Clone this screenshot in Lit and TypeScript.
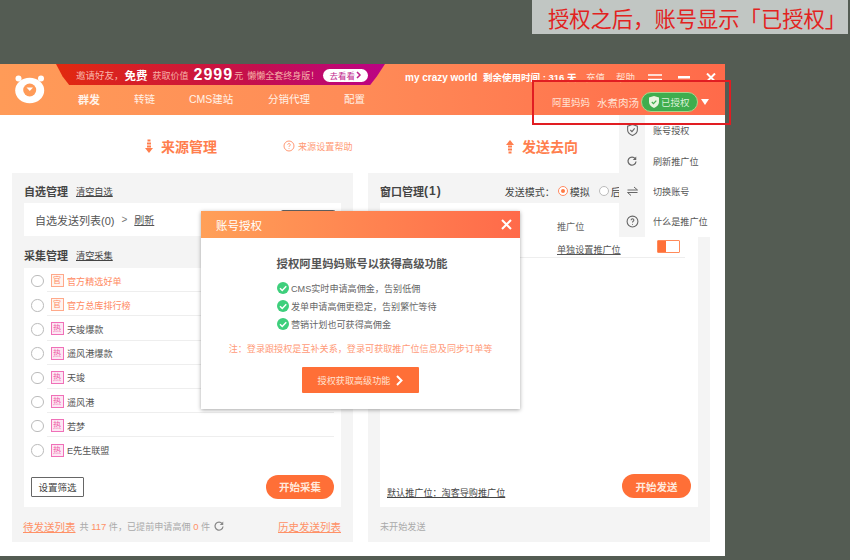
import { LitElement, html, css, svg } from 'lit';
import { customElement } from 'lit/decorators.js';

const SOURCES = [
  { tag: '官', name: '官方精选好单', official: true },
  { tag: '官', name: '官方总库排行榜', official: true },
  { tag: '热', name: '天竣爆款', official: false },
  { tag: '热', name: '遥风港爆款', official: false },
  { tag: '热', name: '天竣', official: false },
  { tag: '热', name: '遥风港', official: false },
  { tag: '热', name: '若梦', official: false },
  { tag: '热', name: 'E先生联盟', official: false },
];

const NAV = ['群发', '转链', 'CMS建站', '分销代理', '配置'];

const BENEFITS = [
  'CMS实时申请高佣金，告别低佣',
  '发单申请高佣更稳定，告别繁忙等待',
  '营销计划也可获得高佣金',
];

const refreshIcon = svg`<path d="M18.5 7.5A8 8 0 1 0 20 13" fill="none" stroke="currentColor" stroke-width="2.5"/><path d="M20.5 3v7h-7z" fill="currentColor"/>`;

@customElement('app-root')
export class AppRoot extends LitElement {
  static styles = css`
    :host {
      display: block;
      width: 850px;
      height: 560px;
      overflow: hidden;
      position: relative;
      background: #545c53;
      font-family: "Liberation Sans", "Noto Sans CJK SC", sans-serif;
      font-size: 10px;
      color: #555;
    }
    * { box-sizing: border-box; }
    .page { padding-top: 64px; }
    .window {
      width: 725px;
      height: 492px;
      background: #fff;
      position: relative;
    }

    /* header */
    .header {
      height: 51px;
      display: flex;
      background: linear-gradient(90deg, #ff9b58 0%, #ff8b57 50%, #ff6a4a 100%);
      color: #fff;
    }
    .logo { width: 56px; padding: 10px 0 0 15px; flex: none; }
    .head-main { flex: 1; display: flex; flex-direction: column; min-width: 0; }
    .head-top { display: flex; height: 21px; }
    .promo {
      width: 329px;
      height: 21px;
      background: linear-gradient(90deg, #e2290e, #c40f4d 60%, #bb0385);
      clip-path: polygon(0 0, 100% 0, 97.5% 60%, 95.5% 100%, 4% 100%, 2% 60%);
      display: flex;
      align-items: center;
      padding: 1px 0 0 20px;
      font-size: 9px;
      color: #f7b3a8;
      white-space: nowrap;
      flex: none;
    }
    .promo .invite { font-size: 9.5px; }
    .promo b { color: #fff; font-size: 11.5px; margin: 0 5px 0 1px; }
    .promo .price { color: #fff; font-size: 16px; font-weight: 700; margin: 0 1px 0 5px; letter-spacing: 1px; }
    .promo .yuan { margin-right: 4px; }
    .promo .see {
      margin-left: 4px;
      width: 45px;
      height: 13px;
      border-radius: 7px;
      background: #fff;
      color: #c0248c;
      font-size: 8.5px;
      display: flex;
      align-items: center;
      justify-content: center;
      gap: 1px;
    }
    .user {
      margin-left: 20px;
      display: flex;
      align-items: center;
      font-size: 9.5px;
      white-space: nowrap;
      padding-top: 5px;
    }
    .user .name { font-weight: 700; width: 78px; font-size: 10px; }
    .user .days { width: 103px; font-weight: 700; }
    .user .link { width: 30px; color: #ffe3d6; }
    .win-ctrl { display: flex; align-items: center; gap: 16px; margin-left: 2px; }
    .head-bottom { flex: 1; display: flex; align-items: center; }
    .nav { display: flex; margin-left: 22px; font-size: 10.5px; color: #fff2e8; padding-bottom: 3px; }
    .nav span { white-space: nowrap; }
    .nav span:nth-child(1) { width: 56px; font-weight: 700; font-size: 11px; }
    .nav span:nth-child(2) { width: 55px; }
    .nav span:nth-child(3) { width: 79px; }
    .nav span:nth-child(4) { width: 76px; }
    .account {
      margin-left: auto;
      display: flex;
      align-items: center;
      padding-right: 16px;
      padding-top: 4px;
      color: #ffe3d6;
    }
    .account .ali { font-size: 9.5px; margin-right: 7px; }
    .account .nick { font-size: 10.5px; margin-right: 2px; }
    .authed {
      width: 57px;
      height: 20px;
      border-radius: 10px;
      background: #3fad4e;
      border: 1px solid #a9d68a;
      display: flex;
      align-items: center;
      gap: 2px;
      padding-left: 7px;
      font-size: 9.5px;
      color: #d8f0d8;
      margin-right: 3px;
    }
    .caret {
      width: 0;
      height: 0;
      border-left: 4px solid transparent;
      border-right: 4px solid transparent;
      border-top: 6px solid #fff;
    }

    /* body */
    .body {
      display: grid;
      grid-template-columns: 341px 342px;
      column-gap: 15px;
      padding: 0 12px;
    }
    .title {
      height: 58px;
      padding-top: 4px;
      display: flex;
      align-items: center;
      font-size: 14px;
      font-weight: 700;
      color: #ff7e4d;
      white-space: nowrap;
    }
    .title.left { padding-left: 133px; }
    .title.right { padding-left: 138px; }
    .title svg { margin-right: 8px; }
    .help {
      margin-left: 66px;
      display: flex;
      align-items: center;
      font-size: 9.1px;
      font-weight: 400;
      color: #ff9a75;
    }
    .help svg { margin-right: 3px; }
    .panel {
      height: 369px;
      background: #f4f4f4;
      padding: 0 12px;
      display: flex;
      flex-direction: column;
    }
    .sec-title {
      display: flex;
      align-items: center;
      height: 30px;
      padding-top: 6px;
      font-size: 11px;
      font-weight: 700;
      color: #444;
      white-space: nowrap;
      flex: none;
    }
    .sec-title.second { height: 32px; }
    .sec-title a {
      margin-left: 8px;
      font-size: 9.2px;
      font-weight: 400;
      color: #444;
      text-decoration: underline;
    }
    .sec-title .cnt { font-size: 12px; letter-spacing: 1px; }
    .picked {
      height: 33px;
      background: #fff;
      display: flex;
      align-items: center;
      padding-left: 11px;
      font-size: 11px;
      color: #555;
      position: relative;
      white-space: nowrap;
      flex: none;
    }
    .picked i { font-style: normal; margin: 0 7px; color: #777; font-size: 10px; }
    .picked a { text-decoration: underline; font-size: 10px; }
    .picked .ghost {
      position: absolute;
      left: 257px;
      top: 7px;
      width: 54px;
      height: 10px;
      border: 1px solid #666;
      border-bottom: 0;
      border-radius: 2px 2px 0 0;
    }
    .list {
      flex: 1;
      background: #fff;
      padding: 0 7px;
    }
    .row {
      display: flex;
      align-items: center;
      height: 24.2px;
    }
    .radio {
      width: 12.5px;
      height: 12.5px;
      margin-top: 2px;
      border-radius: 50%;
      border: 1.5px solid #bbb;
      background: #fff;
      flex: none;
      margin-right: 3px;
    }
    .row-main {
      flex: 1;
      height: 100%;
      padding: 2px 0 0 4px;
      display: flex;
      align-items: center;
      border-bottom: 1px solid #eee;
      font-size: 9.1px;
      color: #555;
      white-space: nowrap;
    }
    .row:nth-child(8) .row-main { border-bottom: 0; }
    .row-main.official { color: #ff8a62; }
    .tag {
      width: 13px;
      height: 13px;
      margin-right: 3.5px;
      border: 1px solid #f070b8;
      background: #fde6f3;
      color: #ee5fa8;
      font-size: 8px;
      line-height: 11px;
      text-align: center;
      flex: none;
    }
    .official .tag { border-color: #ffa98a; background: #fff4ef; color: #ff8a62; }
    .list-foot {
      display: flex;
      align-items: center;
      justify-content: space-between;
      margin-top: 13px;
    }
    .filter {
      width: 53px;
      height: 20px;
      margin-top: 1px;
      border: 1px solid #666;
      border-radius: 1px;
      font-size: 9.5px;
      color: #444;
      display: flex;
      align-items: center;
      justify-content: center;
    }
    .go {
      width: 68px;
      height: 24px;
      border-radius: 12px;
      background: #ff6f37;
      color: #ffe9dc;
      font-size: 10.5px;
      font-weight: 700;
      display: flex;
      align-items: center;
      justify-content: center;
      flex: none;
    }
    .panel-foot {
      height: 35px;
      padding-top: 3px;
      display: flex;
      align-items: center;
      font-size: 9.1px;
      color: #aaa;
      white-space: nowrap;
      flex: none;
    }
    .panel-foot a { color: #ff9166; font-size: 10.5px; text-decoration: underline; }
    .panel-foot a:first-child { margin-left: -1px; }
    .panel-foot em { font-style: normal; color: #ff9166; font-size: 9.5px; }
    .panel-foot .count { margin-left: 4px; }
    .panel-foot svg { margin-left: 3px; color: #888; }
    .panel-foot .hist { margin-left: auto; }

    /* right panel */
    .mode {
      margin-left: 63px;
      display: flex;
      align-items: center;
      font-size: 10px;
      font-weight: 400;
      color: #444;
      white-space: nowrap;
    }
    .mode .dot {
      width: 10px;
      height: 10px;
      border-radius: 50%;
      border: 1px solid #ff8a62;
      margin: 0 2px 0 3px;
      display: inline-flex;
      align-items: center;
      justify-content: center;
      background: #fff;
    }
    .mode .dot::after {
      content: '';
      width: 4px;
      height: 4px;
      border-radius: 50%;
      background: #ff7a45;
    }
    .mode .dot.off { border-color: #bbb; margin-left: 9px; }
    .mode .dot.off::after { display: none; }
    .win-list {
      flex: 1;
      background: #fff;
      display: flex;
      flex-direction: column;
      padding: 0 7px;
      font-size: 9.1px;
    }
    .win-head {
      height: 29px;
      margin-top: 8px;
      display: flex;
      align-items: center;
      padding-left: 170px;
      color: #666;
    }
    .win-row {
      height: 18px;
      display: flex;
      align-items: center;
      border-bottom: 1px solid #eee;
      padding-left: 170px;
      margin-right: 6px;
      color: #555;
      white-space: nowrap;
    }
    .win-row a { text-decoration: underline; }
    .toggle {
      margin: -5px 0 0 36px;
      width: 23px;
      height: 13px;
      border: 1px solid #ff8a5a;
      background: linear-gradient(90deg, #ff7038 0 8px, #fff 8px);
      border-radius: 1px;
      flex: none;
    }
    .win-foot {
      margin-top: auto;
      height: 33px;
      display: flex;
      align-items: flex-start;
      justify-content: space-between;
      color: #444;
      white-space: nowrap;
    }
    .win-foot a { text-decoration: underline; padding-top: 11px; }
    .win-foot .go { width: 69px; }

    /* overlays */
    .menu {
      position: absolute;
      left: 619px;
      top: 51px;
      width: 106px;
      height: 122px;
      background: #fff;
      display: grid;
      grid-template-columns: 26px 1fr;
      grid-auto-rows: 30.4px;
      font-size: 9.1px;
      color: #555;
    }
    .menu div { display: flex; align-items: center; }
    .menu .ic { background: #f4f4f4; justify-content: center; color: #666; }
    .menu .lbl { padding-left: 8px; white-space: nowrap; }

    .modal {
      position: absolute;
      left: 201px;
      top: 147px;
      width: 319px;
      height: 198px;
      background: #fff;
      box-shadow: 0 1px 4px rgba(0, 0, 0, .35);
      display: flex;
      flex-direction: column;
      align-items: center;
    }
    .modal-head {
      align-self: stretch;
      height: 27px;
      background: linear-gradient(90deg, #ffa058, #ff6a4a);
      display: flex;
      align-items: center;
      justify-content: space-between;
      padding: 0 8px 0 15px;
      color: #fff;
      font-size: 11.5px;
      flex: none;
    }
    .modal h2 {
      margin: 18px 0 0;
      padding-left: 3px;
      font-size: 11.4px;
      font-weight: 700;
      color: #555;
      line-height: 16px;
    }
    .benefits { align-self: flex-start; margin: 7px 0 0 76px; }
    .benefit {
      height: 18px;
      display: flex;
      align-items: center;
      gap: 2px;
      font-size: 9.1px;
      color: #666;
      white-space: nowrap;
    }
    .note { margin-top: 9px; font-size: 9.1px; color: #ff9a78; line-height: 14px; white-space: nowrap; }
    .cta {
      margin-top: 11px;
      width: 117px;
      height: 26px;
      background: #ff6f37;
      border-radius: 1px;
      color: #ffe3d3;
      font-size: 9.1px;
      display: flex;
      align-items: center;
      justify-content: center;
      gap: 6px;
    }

    .highlight {
      position: absolute;
      left: 532px;
      top: 80px;
      width: 199px;
      height: 45px;
      border: 2px solid #e11d22;
      pointer-events: none;
    }
    .note-box {
      position: absolute;
      left: 532px;
      top: 0;
      width: 316px;
      height: 34px;
      padding-left: 14px;
      background: #c1c6c3;
      color: #e2231f;
      font-size: 21.3px;
      display: flex;
      align-items: center;
      justify-content: center;
      white-space: nowrap;
    }
  `;

  private _logo() {
    return html`<svg width="30" height="30" viewBox="0 0 30 30">
      <circle cx="3.5" cy="4.5" r="3" fill="#fff"/>
      <circle cx="26" cy="4.5" r="3" fill="#fff"/>
      <ellipse cx="14.7" cy="16.5" rx="14.5" ry="12.7" fill="#fff"/>
      <circle cx="14.7" cy="16" r="6.5" fill="#ff9b58"/>
      <path d="M11.5 13.5h6.5l-3.2 3.5z" fill="#fff"/>
    </svg>`;
  }

  private _arrow(up: boolean) {
    return html`<svg width="8" height="15" viewBox="0 0 8 14" fill="#ff7e4d" style=${up ? 'transform:rotate(180deg)' : ''}>
      <rect x="2.5" y="0" width="3" height="2"/><rect x="2" y="3" width="4" height="2"/>
      <rect x="2" y="6" width="4" height="2"/><path d="M0 8.5h8l-4 5z"/>
    </svg>`;
  }

  private _helpIcon(size: number) {
    return html`<svg width=${size} height=${size} viewBox="0 0 24 24" fill="none" stroke="currentColor" stroke-width="2">
      <circle cx="12" cy="12" r="10"/>
      <path d="M9.5 9.5a2.5 2.5 0 1 1 3.8 2.1c-.9.6-1.3 1.1-1.3 2.4"/>
      <path d="M12 16.5v1.5"/>
    </svg>`;
  }

  private _check() {
    return html`<svg width="12" height="12" viewBox="0 0 24 24">
      <circle cx="12" cy="12" r="12" fill="#3ecf7c"/>
      <path d="M6 12.5l4.5 4.5L18.5 8.5" fill="none" stroke="#fff" stroke-width="3"/>
    </svg>`;
  }

  private _renderHeader() {
    return html`<div class="header">
      <div class="logo">${this._logo()}</div>
      <div class="head-main">
        <div class="head-top">
          <div class="promo">
            <span class="invite">邀请好友，</span><b>免费</b>获取价值<span class="price">2999</span><span class="yuan">元</span>懒懒全套终身版！
            <span class="see">去看看<svg width="6" height="8" viewBox="0 0 6 8"><path d="M1 1l3 3-3 3" fill="none" stroke="#c0248c" stroke-width="1.5"/></svg></span>
          </div>
          <div class="user">
            <span class="name">my crazy world</span>
            <span class="days">剩余使用时间 : 316 天</span>
            <span class="link">充值</span>
            <span class="link">帮助</span>
            <div class="win-ctrl">
              <svg width="14" height="7" viewBox="0 0 14 7"><path d="M0 1h14M0 5.5h14" stroke="#fff" stroke-width="1.3"/></svg>
              <svg width="12" height="3" viewBox="0 0 12 3"><rect width="12" height="2.5" fill="#fff"/></svg>
              <svg width="10" height="9" viewBox="0 0 10 9"><path d="M1 .5l8 8M9 .5l-8 8" stroke="#fff" stroke-width="2"/></svg>
            </div>
          </div>
        </div>
        <div class="head-bottom">
          <div class="nav">${NAV.map((n) => html`<span>${n}</span>`)}</div>
          <div class="account">
            <span class="ali">阿里妈妈</span>
            <span class="nick">水煮肉汤</span>
            <span class="authed">
              <svg width="10" height="12" viewBox="0 0 10 12"><path d="M5 0l5 1.5V6c0 3-2.5 5-5 6-2.5-1-5-3-5-6V1.500z" fill="#e8f5df"/><path d="M2.8 6l1.7 1.7L7.3 4.700" fill="none" stroke="#3fad4e" stroke-width="1.2"/></svg>
              已授权
            </span>
            <span class="caret"></span>
          </div>
        </div>
      </div>
    </div>`;
  }

  private _renderLeft() {
    return html`<div>
      <div class="title left">
        ${this._arrow(false)}来源管理
        <span class="help">${this._helpIcon(12)}来源设置帮助</span>
      </div>
      <div class="panel">
        <div class="sec-title">自选管理<a>清空自选</a></div>
        <div class="picked">自选发送列表(0)<i>&gt;</i><a>刷新</a><span class="ghost"></span></div>
        <div class="sec-title second">采集管理<a>清空采集</a></div>
        <div class="list">
          ${SOURCES.map((s) => html`<div class="row">
            <span class="radio"></span>
            <div class="row-main ${s.official ? 'official' : ''}"><span class="tag">${s.tag}</span>${s.name}</div>
          </div>`)}
          <div class="list-foot">
            <span class="filter">设置筛选</span>
            <span class="go">开始采集</span>
          </div>
        </div>
        <div class="panel-foot">
          <a>待发送列表</a>
          <span class="count">共 <em>117</em> 件，已提前申请高佣 <em>0</em> 件</span>
          <svg width="12" height="12" viewBox="0 0 24 24">${refreshIcon}</svg>
          <a class="hist">历史发送列表</a>
        </div>
      </div>
    </div>`;
  }

  private _renderRight() {
    return html`<div>
      <div class="title right">${this._arrow(true)}发送去向</div>
      <div class="panel">
        <div class="sec-title">窗口管理<span class="cnt">(1)</span>
          <span class="mode">发送模式：<span class="dot"></span>模拟<span class="dot off"></span>后</span>
        </div>
        <div class="win-list">
          <div class="win-head">推广位</div>
          <div class="win-row"><a>单独设置推广位</a><span class="toggle"></span></div>
          <div class="win-foot">
            <a>默认推广位：淘客导购推广位</a>
            <span class="go">开始发送</span>
          </div>
        </div>
        <div class="panel-foot">未开始发送</div>
      </div>
    </div>`;
  }

  private _renderMenu() {
    const items = [
      ['账号授权', html`<svg width="13" height="14" viewBox="0 0 24 24" fill="none" stroke="currentColor" stroke-width="2"><path d="M12 2l9 3v7c0 5-4 8-9 10-5-2-9-5-9-10V5z"/><path d="M8 12l3 3 5-6"/></svg>`],
      ['刷新推广位', html`<svg width="12" height="12" viewBox="0 0 24 24">${refreshIcon}</svg>`],
      ['切换账号', html`<svg width="13" height="12" viewBox="0 0 24 24" fill="none" stroke="currentColor" stroke-width="2"><path d="M2 10h20L15 4M22 15H2l7 6"/></svg>`],
      ['什么是推广位', this._helpIcon(13)],
    ] as const;
    return html`<div class="menu">
      ${items.map(([label, icon]) => html`<div class="ic">${icon}</div><div class="lbl">${label}</div>`)}
    </div>`;
  }

  private _renderModal() {
    return html`<div class="modal">
      <div class="modal-head">
        <span>账号授权</span>
        <svg width="11" height="11" viewBox="0 0 11 11"><path d="M1 1l9 9M10 1l-9 9" stroke="#fff" stroke-width="2"/></svg>
      </div>
      <h2>授权阿里妈妈账号以获得高级功能</h2>
      <div class="benefits">
        ${BENEFITS.map((b) => html`<div class="benefit">${this._check()}${b}</div>`)}
      </div>
      <div class="note">注：登录跟授权是互补关系，登录可获取推广位信息及同步订单等</div>
      <div class="cta">授权获取高级功能
        <svg width="7" height="11" viewBox="0 0 7 11"><path d="M1 1l4.5 4.500L1 10" fill="none" stroke="#fff" stroke-width="2"/></svg>
      </div>
    </div>`;
  }

  render() {
    return html`
      <div class="page">
        <div class="window">
          ${this._renderHeader()}
          <div class="body">${this._renderLeft()}${this._renderRight()}</div>
          ${this._renderMenu()}
          ${this._renderModal()}
        </div>
      </div>
      <div class="highlight"></div>
      <div class="note-box">授权之后，账号显示「已授权」</div>
    `;
  }
}
